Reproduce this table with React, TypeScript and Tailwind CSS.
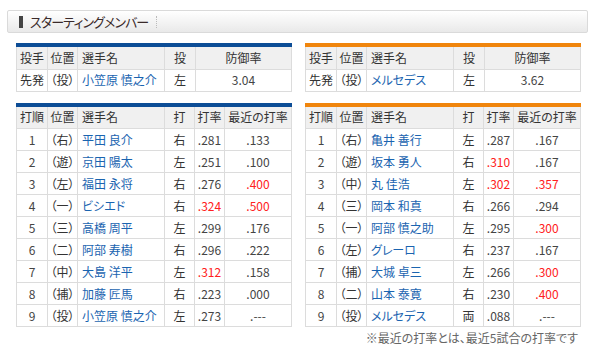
import React from "react";

type Row = { n: string; pos: string; name: string; bat: string; avg: string; avgRed?: boolean; rec: string; recRed?: boolean };

const left: Row[] = [
  { n: "1", pos: "（右）", name: "平田 良介", bat: "右", avg: ".281", rec: ".133" },
  { n: "2", pos: "（遊）", name: "京田 陽太", bat: "左", avg: ".251", rec: ".100" },
  { n: "3", pos: "（左）", name: "福田 永将", bat: "右", avg: ".276", rec: ".400", recRed: true },
  { n: "4", pos: "（一）", name: "ビシエド", bat: "右", avg: ".324", avgRed: true, rec: ".500", recRed: true },
  { n: "5", pos: "（三）", name: "高橋 周平", bat: "左", avg: ".299", rec: ".176" },
  { n: "6", pos: "（二）", name: "阿部 寿樹", bat: "右", avg: ".296", rec: ".222" },
  { n: "7", pos: "（中）", name: "大島 洋平", bat: "左", avg: ".312", avgRed: true, rec: ".158" },
  { n: "8", pos: "（捕）", name: "加藤 匠馬", bat: "右", avg: ".223", rec: ".000" },
  { n: "9", pos: "（投）", name: "小笠原 慎之介", bat: "左", avg: ".273", rec: ".---" },
];

const right: Row[] = [
  { n: "1", pos: "（右）", name: "亀井 善行", bat: "左", avg: ".287", rec: ".167" },
  { n: "2", pos: "（遊）", name: "坂本 勇人", bat: "右", avg: ".310", avgRed: true, rec: ".167" },
  { n: "3", pos: "（中）", name: "丸 佳浩", bat: "左", avg: ".302", avgRed: true, rec: ".357", recRed: true },
  { n: "4", pos: "（三）", name: "岡本 和真", bat: "右", avg: ".266", rec: ".294" },
  { n: "5", pos: "（一）", name: "阿部 慎之助", bat: "左", avg: ".295", rec: ".300", recRed: true },
  { n: "6", pos: "（左）", name: "グレーロ", bat: "右", avg: ".237", rec: ".167" },
  { n: "7", pos: "（捕）", name: "大城 卓三", bat: "左", avg: ".266", rec: ".300", recRed: true },
  { n: "8", pos: "（二）", name: "山本 泰寛", bat: "右", avg: ".230", rec: ".400", recRed: true },
  { n: "9", pos: "（投）", name: "メルセデス", bat: "両", avg: ".088", rec: ".---" },
];

const th = "h-[22px] border border-t-0 border-[#dcdcdc] bg-[#f0f0f0] font-normal text-[#333] p-0";
const td = "h-[22px] border border-[#dcdcdc] p-0";

function PitcherTable({ color, name, era }: { color: string; name: string; era: string }) {
  return (
    <div className={`border-t-4 ${color}`}>
      <table className="w-[275px] table-fixed border-collapse text-[12px] leading-none">
        <colgroup>
          <col className="w-[31px]" />
          <col className="w-[30px]" />
          <col className="w-[87px]" />
          <col className="w-[31px]" />
          <col className="w-[96px]" />
        </colgroup>
        <thead>
          <tr>
            <th className={`${th} text-center`}>投手</th>
            <th className={`${th} text-center`}>位置</th>
            <th className={`${th} text-left pl-[4px]`}>選手名</th>
            <th className={`${th} text-center`}>投</th>
            <th className={`${th} text-center`}>防御率</th>
          </tr>
        </thead>
        <tbody>
          <tr className="text-[#333]">
            <td className={`${td} text-center`}>先発</td>
            <td className={`${td} text-center`}>（投）</td>
            <td className={`${td} pl-[4px] text-[#1a64b0] whitespace-nowrap`}>{name}</td>
            <td className={`${td} text-center`}>左</td>
            <td className={`${td} text-center text-[#444]`}>{era}</td>
          </tr>
        </tbody>
      </table>
    </div>
  );
}

function LineupTable({ color, rows }: { color: string; rows: Row[] }) {
  return (
    <div className={`border-t-4 ${color}`}>
      <table className="w-[275px] table-fixed border-collapse text-[12px] leading-none">
        <colgroup>
          <col className="w-[31px]" />
          <col className="w-[30px]" />
          <col className="w-[87px]" />
          <col className="w-[30px]" />
          <col className="w-[30px]" />
          <col className="w-[67px]" />
        </colgroup>
        <thead>
          <tr>
            <th className={`${th} text-center`}>打順</th>
            <th className={`${th} text-center`}>位置</th>
            <th className={`${th} text-left pl-[4px]`}>選手名</th>
            <th className={`${th} text-center`}>打</th>
            <th className={`${th} text-center`}>打率</th>
            <th className={`${th} text-center whitespace-nowrap`}>最近の打率</th>
          </tr>
        </thead>
        <tbody>
          {rows.map((r) => (
            <tr key={r.n} className="text-[#333]">
              <td className={`${td} text-center text-[#444]`}>{r.n}</td>
              <td className={`${td} text-center`}>{r.pos}</td>
              <td className={`${td} pl-[4px] text-[#1a64b0] whitespace-nowrap`}>{r.name}</td>
              <td className={`${td} text-center`}>{r.bat}</td>
              <td className={`${td} text-center ${r.avgRed ? "text-[#ff2020]" : "text-[#444]"}`}>{r.avg}</td>
              <td className={`${td} text-center ${r.recRed ? "text-[#ff2020]" : "text-[#444]"}`}>{r.rec}</td>
            </tr>
          ))}
        </tbody>
      </table>
    </div>
  );
}

export default function App() {
  return (
    <div className="w-[600px] h-[357px] bg-white pt-[10px] font-['Noto_Sans_CJK_JP',sans-serif] [font-feature-settings:'palt']">
      <div className="ml-[7px] w-[581px] h-[23px] rounded-[2px] border border-[#dadada] bg-gradient-to-b from-white to-[#e9e9e9] flex items-center">
        <div className="ml-[11px] w-[4px] h-[12px] bg-[#444]" />
        <div className="ml-[7px] text-[13px] leading-none text-[#3a2a2a] tracking-[-0.9px]">スターティングメンバー</div>
        <div className="ml-[8px] h-[12px] border-l border-dotted border-[#bbb]" />
      </div>
      <div className="flex pl-[16px] gap-[13px] mt-[10px]">
        <div className="flex flex-col gap-[11px]">
          <PitcherTable color="border-[#0c4d96]" name="小笠原 慎之介" era="3.04" />
          <LineupTable color="border-[#0c4d96]" rows={left} />
        </div>
        <div className="flex flex-col gap-[11px]">
          <PitcherTable color="border-[#f0850c]" name="メルセデス" era="3.62" />
          <LineupTable color="border-[#f0850c]" rows={right} />
        </div>
      </div>
      <div className="mt-[5px] pr-[22px] text-right text-[12px] leading-none text-[#666]">※最近の打率とは、最近5試合の打率です</div>
    </div>
  );
}
